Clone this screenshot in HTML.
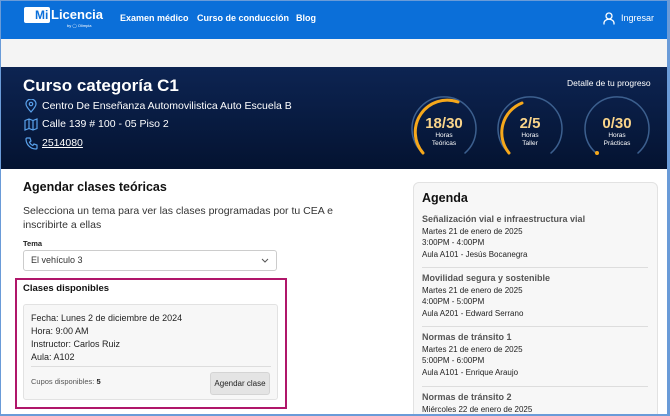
<!DOCTYPE html><html><head><meta charset="utf-8"><style>
*{margin:0;padding:0;box-sizing:border-box}
html,body{width:670px;height:416px;overflow:hidden}
body{font-family:"Liberation Sans",sans-serif;background:#fff;position:relative;color:#222}
.a{position:absolute;white-space:nowrap}
.frame{position:absolute;left:0;top:0;width:670px;height:416px;border:1px solid #6a9bd8;border-right:3px solid #6a9bd8;border-bottom:2px solid #6a9bd8;pointer-events:none}
</style></head><body>
<div class="a" style="left:0;top:0;width:670px;height:39px;background:#0b6fd9"></div>
<div class="a" style="left:24px;top:7px;width:26px;height:16px;background:#fff;border-radius:2px"></div>
<div class="a" style="left:35px;top:8px;font-size:12px;font-weight:bold;color:#0b6fd9">Mi</div>
<div class="a" style="left:51px;top:7px;font-size:13px;font-weight:bold;color:#fff">Licencia</div>
<div class="a" style="left:67px;top:23px;font-size:4px;color:#fff">by ◯ Olimpia</div>
<div class="a" style="left:120px;top:13px;font-size:9px;font-weight:bold;color:#fff">Examen médico</div>
<div class="a" style="left:197px;top:13px;font-size:9px;font-weight:bold;color:#fff">Curso de conducción</div>
<div class="a" style="left:296px;top:13px;font-size:9px;font-weight:bold;color:#fff">Blog</div>
<svg class="a" style="left:603px;top:12px" width="12" height="13" viewBox="0 0 12 13"><circle cx="6" cy="4" r="3" fill="none" stroke="#fff" stroke-width="1.3"/><path d="M1 12.5v-1.5a4 3 0 0 1 10 0v1.5" fill="none" stroke="#fff" stroke-width="1.3"/></svg>
<div class="a" style="left:621px;top:13px;font-size:9px;color:#fff">Ingresar</div>
<div class="a" style="left:0;top:39px;width:670px;height:28px;background:#f4f4f4"></div>
<div class="a" style="left:0;top:67px;width:670px;height:102px;background:linear-gradient(#0d2452,#041331)"></div>
<div class="a" style="left:23px;top:76px;font-size:17px;font-weight:bold;color:#fff">Curso categoría C1</div>
<svg class="a" style="left:25px;top:99px" width="12" height="14" viewBox="0 0 12 14"><path d="M6 13C2 8.5 1 6.5 1 5a5 5 0 0 1 10 0c0 1.5-1 3.5-5 8z" fill="none" stroke="#5aa2ec" stroke-width="1.2"/><circle cx="6" cy="5" r="1.7" fill="none" stroke="#5aa2ec" stroke-width="1.2"/></svg>
<div class="a" style="left:42px;top:100px;font-size:10.5px;color:#fff">Centro De Enseñanza Automovilistica Auto Escuela B</div>
<svg class="a" style="left:24px;top:118px" width="14" height="13" viewBox="0 0 14 13"><path d="M1 2.5l4-1.5 4 1.5 4-1.5v9.5l-4 1.5-4-1.5-4 1.5zM5 1v9.5M9 2.5V12" fill="none" stroke="#5aa2ec" stroke-width="1.2"/></svg>
<div class="a" style="left:42px;top:118px;font-size:10.5px;color:#fff">Calle 139 # 100 - 05 Piso 2</div>
<svg class="a" style="left:25px;top:137px" width="13" height="13" viewBox="0 0 13 13"><path d="M2 1h3l1 3-1.5 1.2a7 7 0 0 0 3.3 3.3L9 7l3 1v3a1 1 0 0 1-1 1A10 10 0 0 1 1 2a1 1 0 0 1 1-1z" fill="none" stroke="#5aa2ec" stroke-width="1.2"/></svg>
<div class="a" style="left:42px;top:137px;font-size:10.5px;color:#fff;text-decoration:underline">2514080</div>
<div class="a" style="left:567px;top:78px;font-size:8.5px;color:#fff">Detalle de tu progreso</div>
<svg class="a" style="left:400px;top:90px" width="260" height="80" viewBox="0 0 260 80">
<g fill="none" stroke-linecap="round">
<path d="M23 63A32 32 0 1 1 65 63" stroke="#3c5f8e" stroke-width="1.5"/>
<path d="M23 63A32 32 0 0 1 58 12" stroke="#f6a81b" stroke-width="3"/>
<path d="M109 63A32 32 0 1 1 151 63" stroke="#3c5f8e" stroke-width="1.5"/>
<path d="M109 63A32 32 0 0 1 122 13" stroke="#f6a81b" stroke-width="3"/>
<path d="M196 63A32 32 0 1 1 238 63" stroke="#3c5f8e" stroke-width="1.5"/>
</g><circle cx="197" cy="63" r="2" fill="#f6a81b"/>
<g fill="#f9d48a" font-family="Liberation Sans" font-weight="bold" font-size="15" text-anchor="middle"><text x="44" y="38">18/30</text><text x="130" y="38">2/5</text><text x="217" y="38">0/30</text></g>
<g fill="#fff" font-family="Liberation Sans" font-size="6.5" text-anchor="middle"><text x="44" y="47">Horas</text><text x="44" y="55">Teóricas</text><text x="130" y="47">Horas</text><text x="130" y="55">Taller</text><text x="217" y="47">Horas</text><text x="217" y="55">Prácticas</text></g>
</svg>
<div class="a" style="left:23px;top:180px;font-size:12.5px;font-weight:bold;color:#111">Agendar clases teóricas</div>
<div class="a" style="left:23px;top:204px;font-size:10.5px;color:#333;line-height:14px">Selecciona un tema para ver las clases programadas por tu CEA e<br>inscribirte a ellas</div>
<div class="a" style="left:23px;top:239px;font-size:7.5px;font-weight:bold">Tema</div>
<div class="a" style="left:23px;top:250px;width:254px;height:21px;border:1px solid #ccc;border-radius:3px;background:#fff"></div>
<div class="a" style="left:31px;top:255px;font-size:9px;color:#333">El vehículo 3</div>
<svg class="a" style="left:261px;top:258px" width="8" height="5" viewBox="0 0 8 5"><path d="M1 1l3 3 3-3" fill="none" stroke="#555" stroke-width="1"/></svg>
<div class="a" style="left:15px;top:278px;width:272px;height:131px;border:2px solid #b0166a"></div>
<div class="a" style="left:23px;top:283px;font-size:9.5px;font-weight:bold;color:#111">Clases disponibles</div>
<div class="a" style="left:23px;top:304px;width:255px;height:96px;background:#f7f7f7;border:1px solid #e2e2e2;border-radius:3px"></div>
<div class="a" style="left:31px;top:312px;font-size:9px;color:#222;line-height:13px">Fecha: Lunes 2 de diciembre de 2024<br>Hora: 9:00 AM<br>Instructor: Carlos Ruiz<br>Aula: A102</div>
<div class="a" style="left:31px;top:366px;width:240px;height:1px;background:#ddd"></div>
<div class="a" style="left:31px;top:377px;font-size:7.5px;color:#555">Cupos disponibles: <b style="color:#222">5</b></div>
<div class="a" style="left:210px;top:372px;width:60px;height:23px;background:#e4e4e4;border:1px solid #d4d4d4;border-radius:3px;font-size:8px;color:#222;text-align:center;line-height:21px">Agendar clase</div>
<div class="a" style="left:413px;top:182px;width:245px;height:240px;background:#f7f7f7;border:1px solid #e2e2e2;border-radius:6px"></div>
<div class="a" style="left:422px;top:191px;font-size:12.5px;font-weight:bold;color:#111">Agenda</div>
<div class="a" style="left:422px;top:214px;font-size:8px;color:#222;line-height:11.5px"><span style="font-size:9px;color:#555;font-weight:bold">Señalización vial e infraestructura vial</span><br>Martes 21 de enero de 2025<br>3:00PM - 4:00PM<br>Aula A101 - Jesús Bocanegra</div>
<div class="a" style="left:422px;top:267px;width:226px;height:1px;background:#ddd"></div>
<div class="a" style="left:422px;top:273px;font-size:8px;color:#222;line-height:11.5px"><span style="font-size:9px;color:#555;font-weight:bold">Movilidad segura y sostenible</span><br>Martes 21 de enero de 2025<br>4:00PM - 5:00PM<br>Aula A201 - Edward Serrano</div>
<div class="a" style="left:422px;top:326px;width:226px;height:1px;background:#ddd"></div>
<div class="a" style="left:422px;top:332px;font-size:8px;color:#222;line-height:11.5px"><span style="font-size:9px;color:#555;font-weight:bold">Normas de tránsito 1</span><br>Martes 21 de enero de 2025<br>5:00PM - 6:00PM<br>Aula A101 - Enrique Araujo</div>
<div class="a" style="left:422px;top:386px;width:226px;height:1px;background:#ddd"></div>
<div class="a" style="left:422px;top:392px;font-size:8px;color:#222;line-height:11.5px"><span style="font-size:9px;color:#555;font-weight:bold">Normas de tránsito 2</span><br>Miércoles 22 de enero de 2025</div>
<div class="frame"></div>
</body></html>
